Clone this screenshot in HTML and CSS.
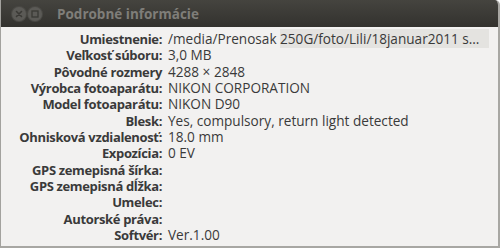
FILE: index.html
```html
<!DOCTYPE html>
<html lang="sk">
<head>
    <meta charset="UTF-8">
    <title>Podrobné informácie</title>
    <link rel="stylesheet" href="styles.css">
</head>
<body>
    <div class="window">
        <div class="titlebar">
            <span class="wbtn">
                <svg width="14" height="14" viewBox="0 0 14 14"><path d="M4.5 4.5 L9.5 9.5 M9.5 4.5 L4.5 9.5" stroke="#3a3935" stroke-width="1.6" stroke-linecap="round"/></svg>
            </span>
            <span class="wbtn">
                <svg width="14" height="14" viewBox="0 0 14 14"><rect x="4" y="4" width="6" height="6" fill="none" stroke="#3a3935" stroke-width="1.3"/></svg>
            </span>
            <span class="title">Podrobné informácie</span>
        </div>

        <!-- Properties table -->
        <div class="props">
            <div class="label">Umiestnenie:</div>
            <div class="value">/media/Prenosak <span class="sel">250G/foto/Lili/18januar2011 s…</span></div>
            <div class="label">Veľkosť súboru:</div>
            <div class="value">3,0 MB</div>
            <div class="label">Pôvodné rozmery</div>
            <div class="value">4288 × 2848</div>
            <div class="label">Výrobca fotoaparátu:</div>
            <div class="value">NIKON CORPORATION</div>
            <div class="label">Model fotoaparátu:</div>
            <div class="value">NIKON D90</div>
            <div class="label">Blesk:</div>
            <div class="value">Yes, compulsory, return light detected</div>
            <div class="label">Ohnisková vzdialenosť:</div>
            <div class="value">18.0 mm</div>
            <div class="label">Expozícia:</div>
            <div class="value">0 EV</div>
            <div class="label">GPS zemepisná šírka:</div>
            <div class="value"></div>
            <div class="label">GPS zemepisná dĺžka:</div>
            <div class="value"></div>
            <div class="label">Umelec:</div>
            <div class="value"></div>
            <div class="label">Autorské práva:</div>
            <div class="value"></div>
            <div class="label">Softvér:</div>
            <div class="value">Ver.1.00</div>
        </div>
    </div>
</body>
</html>
```

FILE: styles.css
```css
body {
    margin: 0;
    font-family: "Open Sans", "DejaVu Sans", sans-serif;
    background: #ffffff;
}
.window {
    width: 497px;
    height: 246px;
    background: #f2f1f0;
    border-left: 1px solid #a3a29e;
    border-right: 2px solid #a8a7a3;
    border-bottom: 2px solid #a8a7a3;
    border-top-right-radius: 5px;
    overflow: hidden;
}
.titlebar {
    height: 27px;
    background: linear-gradient(#45443f, #3a3935 60%, #33322e);
    display: flex;
    align-items: center;
    padding-left: 11px;
    gap: 2px;
}
.wbtn {
    width: 14px;
    height: 14px;
    border-radius: 50%;
    background: #5b5a56;
    box-shadow: 0 0 0 1px #4a4945;
    display: flex;
    margin-top: 1px;
}
.title {
    margin-left: 13px;
    font-weight: bold;
    font-size: 13.5px;
    color: #7f7e79;
}
.props {
    display: grid;
    grid-template-columns: 161px 1fr;
    grid-auto-rows: 16.33px;
    column-gap: 6px;
    padding-top: 4px;
    font-size: 13.6px;
    color: #3a3a3a;
    line-height: 16.33px;
}
.label {
    text-align: right;
    font-weight: bold;
    font-size: 13px;
    letter-spacing: -0.35px;
    white-space: nowrap;
}
.value {
    white-space: nowrap;
}
.sel {
    background: #e4e3e0;
    padding-right: 10px;
}
```
